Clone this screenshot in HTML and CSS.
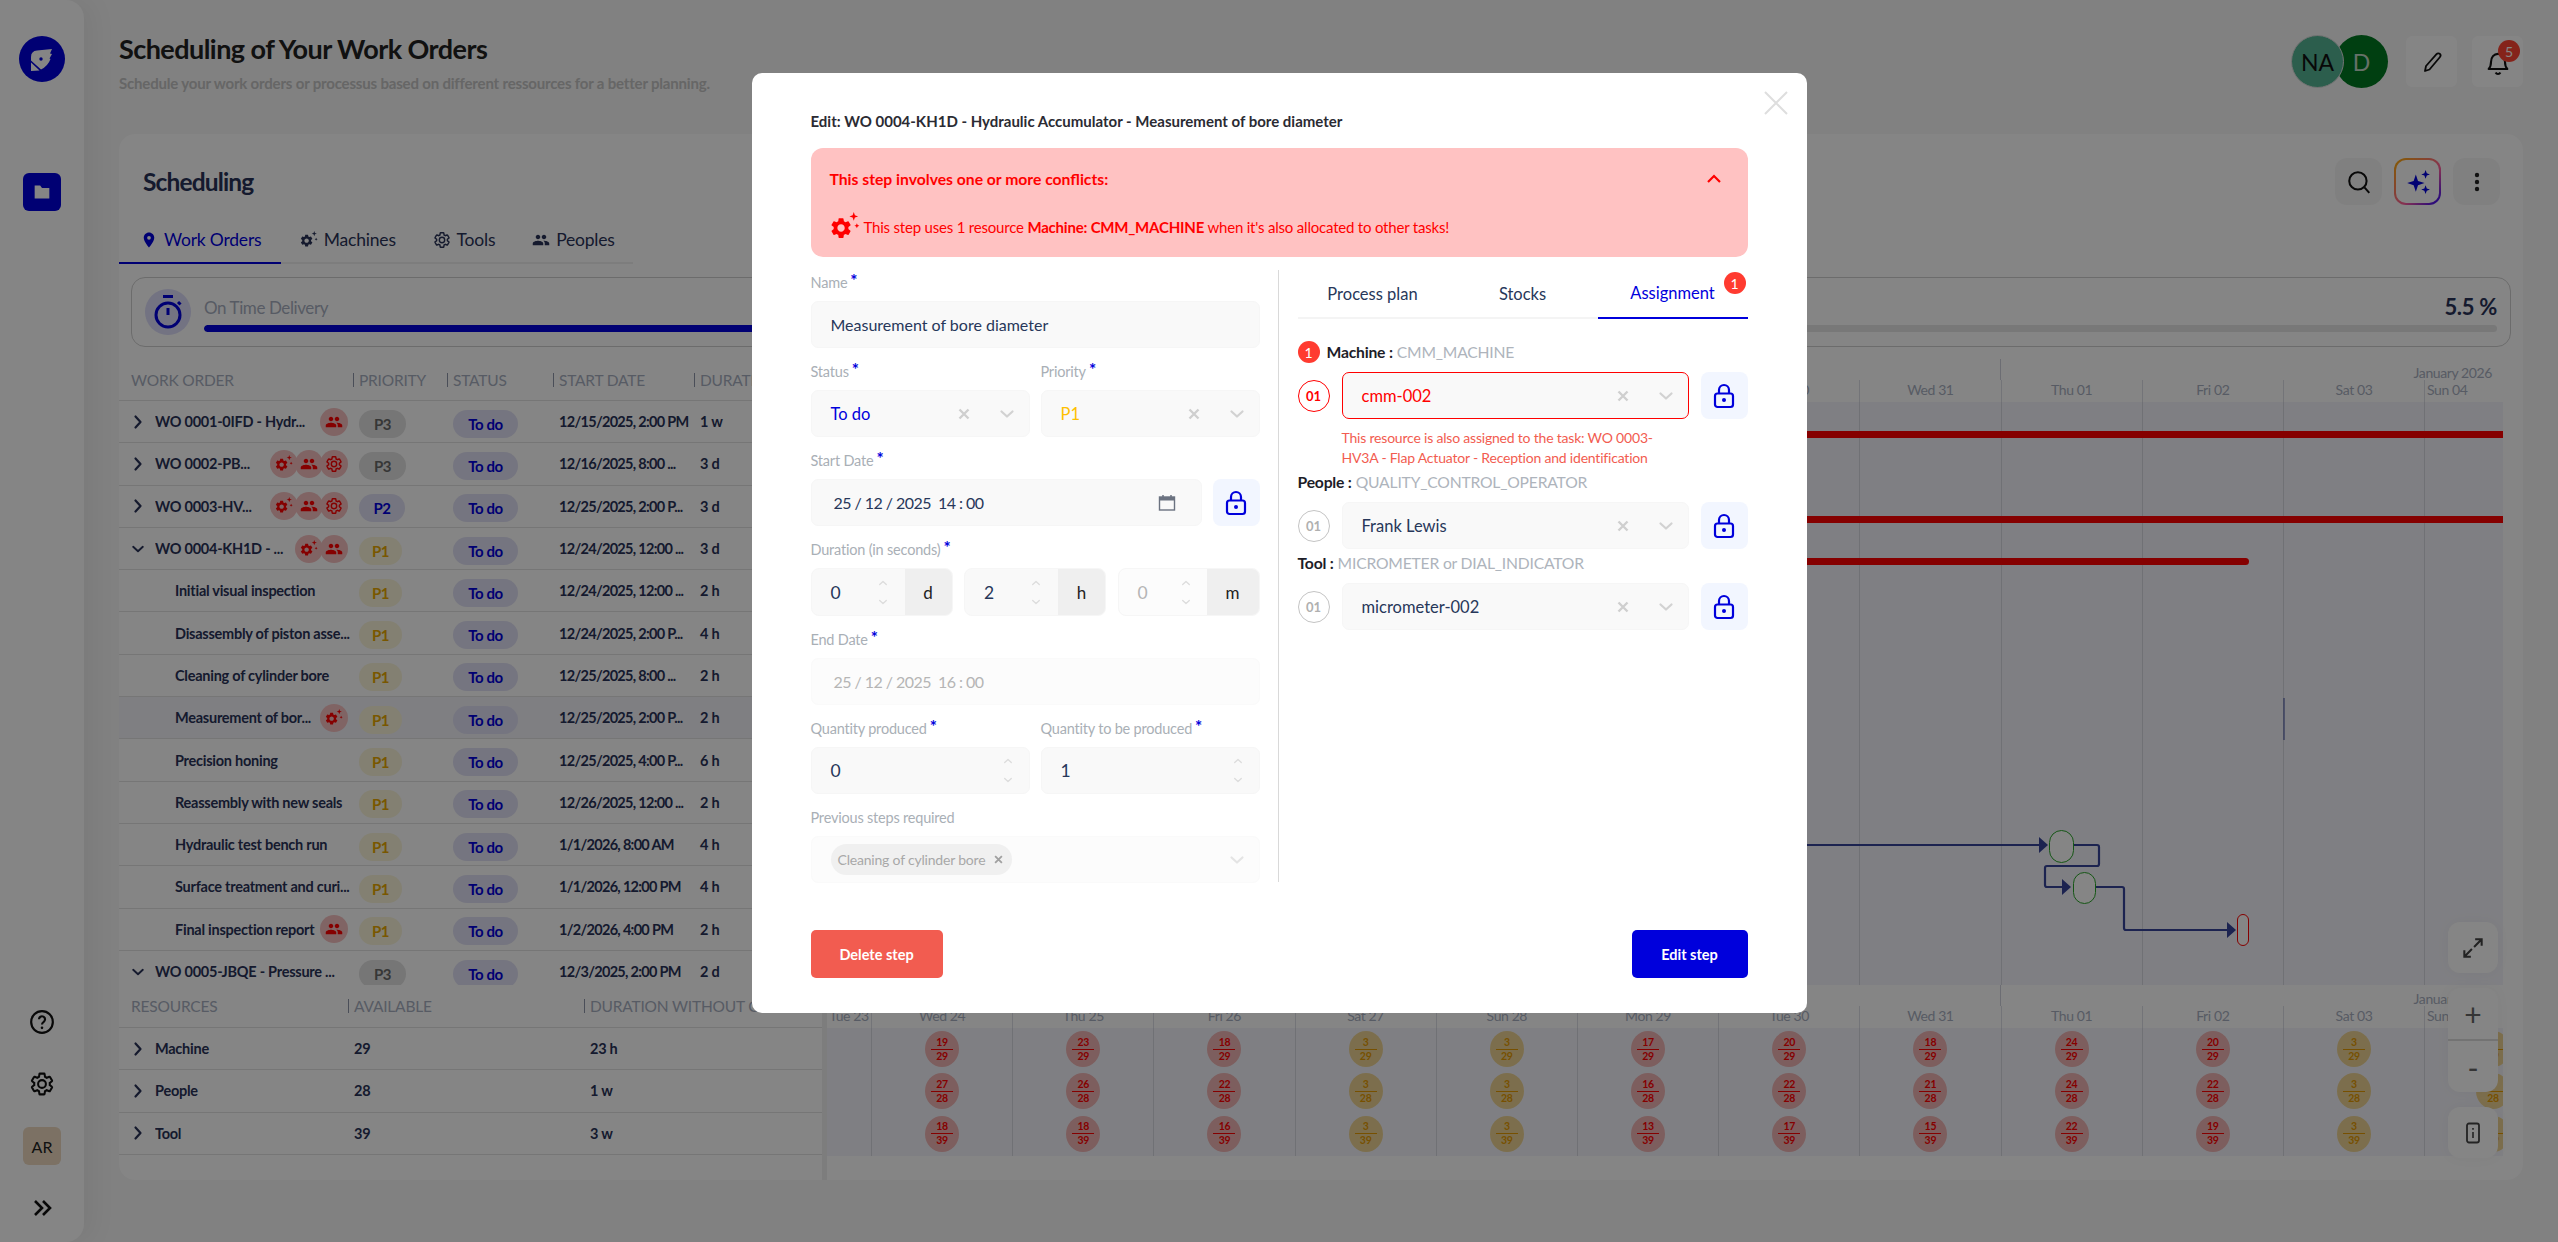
FILE: index.html
```html
<!DOCTYPE html>
<html lang="en">
<head>
<meta charset="utf-8">
<title>Scheduling of Your Work Orders</title>
<link rel="stylesheet" href="styles.css">
</head>
<body>
<svg class="defs" width="0" height="0" aria-hidden="true">
  <defs>
    <symbol id="i-gear" viewBox="0 0 24 24"><path d="M19.14 12.94c.04-.3.06-.61.06-.94 0-.32-.02-.64-.07-.94l2.03-1.58a.49.49 0 0 0 .12-.61l-1.92-3.32a.488.488 0 0 0-.59-.22l-2.39.96c-.5-.38-1.03-.7-1.62-.94l-.36-2.54a.484.484 0 0 0-.48-.41h-3.84c-.24 0-.43.17-.47.41l-.36 2.54c-.59.24-1.13.57-1.62.94l-2.39-.96c-.22-.08-.47 0-.59.22L2.74 8.87c-.12.21-.08.47.12.61l2.03 1.58c-.05.3-.09.63-.09.94s.02.64.07.94l-2.03 1.58a.49.49 0 0 0-.12.61l1.92 3.32c.12.22.37.29.59.22l2.39-.96c.5.38 1.03.7 1.62.94l.36 2.54c.05.24.24.41.48.41h3.84c.24 0 .44-.17.47-.41l.36-2.54c.59-.24 1.13-.56 1.62-.94l2.39.96c.22.08.47 0 .59-.22l1.92-3.32c.12-.22.07-.47-.12-.61l-2.01-1.58zM12 15.6c-1.98 0-3.6-1.62-3.6-3.6s1.62-3.6 3.6-3.6 3.6 1.62 3.6 3.6-1.62 3.6-3.6 3.6z"/></symbol>
    <symbol id="i-machine" viewBox="0 0 24 24"><g transform="translate(-1 3) scale(.82)"><path d="M19.14 12.94c.04-.3.06-.61.06-.94 0-.32-.02-.64-.07-.94l2.03-1.58a.49.49 0 0 0 .12-.61l-1.92-3.32a.488.488 0 0 0-.59-.22l-2.39.96c-.5-.38-1.03-.7-1.62-.94l-.36-2.54a.484.484 0 0 0-.48-.41h-3.84c-.24 0-.43.17-.47.41l-.36 2.54c-.59.24-1.13.57-1.62.94l-2.39-.96c-.22-.08-.47 0-.59.22L2.74 8.87c-.12.21-.08.47.12.61l2.03 1.58c-.05.3-.09.63-.09.94s.02.64.07.94l-2.03 1.58a.49.49 0 0 0-.12.61l1.92 3.32c.12.22.37.29.59.22l2.39-.96c.5.38 1.03.7 1.62.94l.36 2.54c.05.24.24.41.48.41h3.84c.24 0 .44-.17.47-.41l.36-2.54c.59-.24 1.13-.56 1.62-.94l2.39.96c.22.08.47 0 .59-.22l1.92-3.32c.12-.22.07-.47-.12-.61l-2.01-1.58zM12 15.6c-1.98 0-3.6-1.62-3.6-3.6s1.62-3.6 3.6-3.6 3.6 1.62 3.6 3.6-1.62 3.6-3.6 3.6z"/></g><path d="M19 0l.9 2.6 2.6.9-2.6.9-.9 2.6-.9-2.6-2.6-.9 2.6-.9zM21.5 9l.6 1.4 1.4.6-1.4.6-.6 1.4-.6-1.4-1.4-.6 1.4-.6z"/></symbol>
    <symbol id="i-people" viewBox="0 0 24 24"><path d="M16 11c1.66 0 2.99-1.34 2.99-3S17.66 5 16 5c-1.66 0-3 1.34-3 3s1.34 3 3 3zm-8 0c1.66 0 2.99-1.34 2.99-3S9.66 5 8 5C6.34 5 5 6.34 5 8s1.34 3 3 3zm0 2c-2.33 0-7 1.17-7 3.5V19h14v-2.5c0-2.33-4.67-3.5-7-3.5zm8 0c-.29 0-.62.02-.97.05 1.16.84 1.97 1.97 1.97 3.45V19h6v-2.5c0-2.33-4.67-3.5-7-3.5z"/></symbol>
    <symbol id="i-tool" viewBox="0 0 24 24"><path fill="none" stroke="currentColor" stroke-width="1.9" d="M19.14 12.94c.04-.3.06-.61.06-.94 0-.32-.02-.64-.07-.94l2.03-1.58a.49.49 0 0 0 .12-.61l-1.92-3.32a.488.488 0 0 0-.59-.22l-2.39.96c-.5-.38-1.03-.7-1.62-.94l-.36-2.54a.484.484 0 0 0-.48-.41h-3.84c-.24 0-.43.17-.47.41l-.36 2.54c-.59.24-1.13.57-1.62.94l-2.39-.96c-.22-.08-.47 0-.59.22L2.74 8.87c-.12.21-.08.47.12.61l2.03 1.58c-.05.3-.09.63-.09.94s.02.64.07.94l-2.03 1.58a.49.49 0 0 0-.12.61l1.92 3.32c.12.22.37.29.59.22l2.39-.96c.5.38 1.03.7 1.62.94l.36 2.54c.05.24.24.41.48.41h3.84c.24 0 .44-.17.47-.41l.36-2.54c.59-.24 1.13-.56 1.62-.94l2.39.96c.22.08.47 0 .59-.22l1.92-3.32c.12-.22.07-.47-.12-.61l-2.01-1.58zM12 15.6c-1.98 0-3.6-1.62-3.6-3.6s1.62-3.6 3.6-3.6 3.6 1.62 3.6 3.6-1.62 3.6-3.6 3.6z"/></symbol>
    <symbol id="i-pin" viewBox="0 0 24 24"><path d="M12 2C8.13 2 5 5.13 5 9c0 5.25 7 13 7 13s7-7.75 7-13c0-3.87-3.13-7-7-7zm0 9.5a2.5 2.5 0 0 1 0-5 2.5 2.5 0 0 1 0 5z"/></symbol>
    <symbol id="i-right" viewBox="0 0 10 16"><path d="M2.5 2.5L7.5 8l-5 5.5" fill="none" stroke="currentColor" stroke-width="2.2" stroke-linecap="round" stroke-linejoin="round"/></symbol>
    <symbol id="i-down" viewBox="0 0 16 10"><path d="M2.5 2.5L8 7.5l5.5-5" fill="none" stroke="currentColor" stroke-width="2.2" stroke-linecap="round" stroke-linejoin="round"/></symbol>
    <symbol id="i-x" viewBox="0 0 12 12"><path d="M1.5 1.5l9 9m0-9l-9 9" fill="none" stroke="currentColor" stroke-width="2.4"/></symbol>
    <symbol id="i-lock" viewBox="0 0 22 26"><rect x="2" y="10.5" width="18" height="13.5" rx="2.5" fill="none" stroke="currentColor" stroke-width="2.2"/><path d="M6 10V7a5 5 0 0 1 10 0v3" fill="none" stroke="currentColor" stroke-width="2.2"/><circle cx="11" cy="17" r="2"/></symbol>
  </defs>
</svg>

<div class="app">
  <aside class="sidebar">
    <div class="logo">
      <svg viewBox="0 0 46 46" width="46" height="46"><path d="M12 21Q12 15 18 14.500L33 13l-2 4.500 2 .5-2.500 4.500 1 .5Q29 30 22 33.500L12 24.500z" fill="#fff"/><path d="M12 26.500l8.500 8-8.500.5z" fill="#fff"/><circle cx="22" cy="23" r="1.700" fill="#0000dc"/></svg>
    </div>
    <div class="side-btn side-btn-active">
      <svg viewBox="0 0 24 24" width="22" height="22"><path d="M4 5h6l2 2.5h8V19H4z" fill="#fff"/></svg>
    </div>
    <div class="side-bottom">
      <div class="side-btn">
        <svg viewBox="0 0 24 24" width="26" height="26"><circle cx="12" cy="12" r="10" fill="none" stroke="#111" stroke-width="2"/><path d="M9.2 9.5a2.8 2.8 0 1 1 4.4 2.3c-1 .7-1.6 1.2-1.6 2.4" fill="none" stroke="#111" stroke-width="2"/><circle cx="12" cy="17.4" r="1.2" fill="#111"/></svg>
      </div>
      <div class="side-btn side-gear">
        <svg viewBox="0 0 24 24" width="26" height="26"><use href="#i-tool"/></svg>
      </div>
      <div class="side-btn avatar-ar">AR</div>
      <div class="side-more">
        <svg viewBox="0 0 20 20" width="20" height="20"><path d="M3 3l7 7-7 7M11 3l7 7-7 7" fill="none" stroke="#111" stroke-width="2.6"/></svg>
      </div>
    </div>
  </aside>

  <main class="main">
    <header class="pagehead">
      <div class="pagehead-text">
        <h1 class="page-title">Scheduling of Your Work Orders</h1>
        <p class="page-sub">Schedule your work orders or processus based on different ressources for a better planning.</p>
      </div>
      <div class="pagehead-actions">
        <div class="avatars">
          <span class="avatar avatar-na">NA</span>
          <span class="avatar avatar-d">D</span>
        </div>
        <div class="icon-tile">
          <svg viewBox="0 0 24 24" width="24" height="28"><path d="M5 21l1-5L16.5 4.2c1-1.100 2.500-1.200 3.400-.3s.8 2.300-.1 3.400L9.500 19.500z" fill="none" stroke="#111" stroke-width="1.800" stroke-linejoin="round"/></svg>
        </div>
        <div class="icon-tile bell">
          <svg viewBox="0 0 24 24" width="28" height="28"><path d="M4 18c1.500-1.500 2-3 2-6 0-4 2.500-7 6-7s6 3 6 7c0 3 .5 4.500 2 6z" fill="none" stroke="#111" stroke-width="1.800" stroke-linejoin="round"/><path d="M10 21a2.200 2.200 0 0 0 4 0" fill="none" stroke="#111" stroke-width="1.800"/></svg>
          <span class="bell-badge">5</span>
        </div>
      </div>
    </header>

    <section class="card">
      <div class="card-head">
        <h2 class="card-title">Scheduling</h2>
        <div class="card-actions">
          <div class="tool-btn">
            <svg viewBox="0 0 24 24" width="26" height="26"><circle cx="11" cy="11" r="8" fill="none" stroke="#111" stroke-width="1.900"/><path d="M17 17l4.500 5" stroke="#111" stroke-width="1.900"/></svg>
          </div>
          <div class="tool-btn tool-ai">
            <svg viewBox="0 0 24 24" width="26" height="26" fill="#0000dc"><path d="M10 5l2 6 6 2-6 2-2 6-2-6-6-2 6-2z"/><path d="M19 1l1.100 3 2.900 1-2.900 1L19 9l-1.100-3L15 5l2.900-1zM19 15l1.100 3 2.900 1-2.900 1-1.100 3-1.100-3-2.900-1 2.900-1z"/></svg>
          </div>
          <div class="tool-btn">
            <svg viewBox="0 0 24 24" width="24" height="24" fill="#222"><circle cx="12" cy="5" r="2.200"/><circle cx="12" cy="12" r="2.200"/><circle cx="12" cy="19" r="2.200"/></svg>
          </div>
        </div>
      </div>

      <nav class="tabs">
        <div class="tab tab-active"><svg class="tab-ico" viewBox="0 0 24 24"><use href="#i-pin"/></svg>Work Orders</div>
        <div class="tab"><svg class="tab-ico" viewBox="0 0 24 24"><use href="#i-machine"/></svg>Machines</div>
        <div class="tab"><svg class="tab-ico" viewBox="0 0 24 24"><use href="#i-tool"/></svg>Tools</div>
        <div class="tab"><svg class="tab-ico" viewBox="0 0 24 24"><use href="#i-people"/></svg>Peoples</div>
      </nav>

      <div class="otd">
        <div class="otd-icon">
          <svg viewBox="0 0 32 36" width="32" height="36"><path d="M11 2.500h10" stroke="#0000dc" stroke-width="3"/><circle cx="16" cy="21" r="12" fill="none" stroke="#0000dc" stroke-width="3"/><path d="M16 14v7" stroke="#0000dc" stroke-width="3"/><path d="M26 8l2.500 2.500" stroke="#0000dc" stroke-width="3"/></svg>
        </div>
        <div class="otd-body">
          <div class="otd-top"><span class="otd-label">On Time Delivery</span><span class="otd-value">5.5 %</span></div>
          <div class="otd-bar"><div class="otd-fill"></div></div>
        </div>
      </div>

      <div class="split">
        <div class="left-pane">
          <div class="thead wo-grid">
            <div class="th th-first">WORK ORDER</div>
            <div class="th">PRIORITY</div>
            <div class="th">STATUS</div>
            <div class="th">START DATE</div>
            <div class="th">DURATION</div>
          </div>
          <div class="tbody">
            <div class="tr wo-grid">
              <div class="name"><svg class="chev-r"><use href="#i-right"/></svg><span class="name-text">WO 0001-0IFD - Hydr...</span><span class="badges"><span class="badge"><svg><use href="#i-people"/></svg></span></span></div>
              <div class="cell"><span class="pill p3">P3</span></div>
              <div class="cell"><span class="pill todo">To do</span></div>
              <div class="cell">12/15/2025, 2:00 PM</div><div class="cell">1 w</div>
            </div>
            <div class="tr wo-grid">
              <div class="name"><svg class="chev-r"><use href="#i-right"/></svg><span class="name-text">WO 0002-PB...</span><span class="badges"><span class="badge"><svg><use href="#i-machine"/></svg></span><span class="badge"><svg><use href="#i-people"/></svg></span><span class="badge"><svg><use href="#i-tool"/></svg></span></span></div>
              <div class="cell"><span class="pill p3">P3</span></div>
              <div class="cell"><span class="pill todo">To do</span></div>
              <div class="cell">12/16/2025, 8:00 ...</div><div class="cell">3 d</div>
            </div>
            <div class="tr wo-grid">
              <div class="name"><svg class="chev-r"><use href="#i-right"/></svg><span class="name-text">WO 0003-HV...</span><span class="badges"><span class="badge"><svg><use href="#i-machine"/></svg></span><span class="badge"><svg><use href="#i-people"/></svg></span><span class="badge"><svg><use href="#i-tool"/></svg></span></span></div>
              <div class="cell"><span class="pill p2">P2</span></div>
              <div class="cell"><span class="pill todo">To do</span></div>
              <div class="cell">12/25/2025, 2:00 P...</div><div class="cell">3 d</div>
            </div>
            <div class="tr wo-grid">
              <div class="name"><svg class="chev-d"><use href="#i-down"/></svg><span class="name-text">WO 0004-KH1D - ...</span><span class="badges"><span class="badge"><svg><use href="#i-machine"/></svg></span><span class="badge"><svg><use href="#i-people"/></svg></span></span></div>
              <div class="cell"><span class="pill p1">P1</span></div>
              <div class="cell"><span class="pill todo">To do</span></div>
              <div class="cell">12/24/2025, 12:00 ...</div><div class="cell">3 d</div>
            </div>
            <div class="tr wo-grid">
              <div class="name name-sub"><span class="name-text">Initial visual inspection</span></div>
              <div class="cell"><span class="pill p1">P1</span></div>
              <div class="cell"><span class="pill todo">To do</span></div>
              <div class="cell">12/24/2025, 12:00 ...</div><div class="cell">2 h</div>
            </div>
            <div class="tr wo-grid">
              <div class="name name-sub"><span class="name-text">Disassembly of piston asse...</span></div>
              <div class="cell"><span class="pill p1">P1</span></div>
              <div class="cell"><span class="pill todo">To do</span></div>
              <div class="cell">12/24/2025, 2:00 P...</div><div class="cell">4 h</div>
            </div>
            <div class="tr wo-grid">
              <div class="name name-sub"><span class="name-text">Cleaning of cylinder bore</span></div>
              <div class="cell"><span class="pill p1">P1</span></div>
              <div class="cell"><span class="pill todo">To do</span></div>
              <div class="cell">12/25/2025, 8:00 ...</div><div class="cell">2 h</div>
            </div>
            <div class="tr wo-grid tr-selected">
              <div class="name name-sub"><span class="name-text">Measurement of bor...</span><span class="badges"><span class="badge"><svg><use href="#i-machine"/></svg></span></span></div>
              <div class="cell"><span class="pill p1">P1</span></div>
              <div class="cell"><span class="pill todo">To do</span></div>
              <div class="cell">12/25/2025, 2:00 P...</div><div class="cell">2 h</div>
            </div>
            <div class="tr wo-grid">
              <div class="name name-sub"><span class="name-text">Precision honing</span></div>
              <div class="cell"><span class="pill p1">P1</span></div>
              <div class="cell"><span class="pill todo">To do</span></div>
              <div class="cell">12/25/2025, 4:00 P...</div><div class="cell">6 h</div>
            </div>
            <div class="tr wo-grid">
              <div class="name name-sub"><span class="name-text">Reassembly with new seals</span></div>
              <div class="cell"><span class="pill p1">P1</span></div>
              <div class="cell"><span class="pill todo">To do</span></div>
              <div class="cell">12/26/2025, 12:00 ...</div><div class="cell">2 h</div>
            </div>
            <div class="tr wo-grid">
              <div class="name name-sub"><span class="name-text">Hydraulic test bench run</span></div>
              <div class="cell"><span class="pill p1">P1</span></div>
              <div class="cell"><span class="pill todo">To do</span></div>
              <div class="cell">1/1/2026, 8:00 AM</div><div class="cell">4 h</div>
            </div>
            <div class="tr wo-grid">
              <div class="name name-sub"><span class="name-text">Surface treatment and curi...</span></div>
              <div class="cell"><span class="pill p1">P1</span></div>
              <div class="cell"><span class="pill todo">To do</span></div>
              <div class="cell">1/1/2026, 12:00 PM</div><div class="cell">4 h</div>
            </div>
            <div class="tr wo-grid">
              <div class="name name-sub"><span class="name-text">Final inspection report</span><span class="badges"><span class="badge"><svg><use href="#i-people"/></svg></span></span></div>
              <div class="cell"><span class="pill p1">P1</span></div>
              <div class="cell"><span class="pill todo">To do</span></div>
              <div class="cell">1/2/2026, 4:00 PM</div><div class="cell">2 h</div>
            </div>
            <div class="tr wo-grid">
              <div class="name"><svg class="chev-d"><use href="#i-down"/></svg><span class="name-text">WO 0005-JBQE - Pressure ...</span></div>
              <div class="cell"><span class="pill p3">P3</span></div>
              <div class="cell"><span class="pill todo">To do</span></div>
              <div class="cell">12/3/2025, 2:00 PM</div><div class="cell">2 d</div>
            </div>
          </div>
          <div class="thead res-grid res-head">
            <div class="th th-first">RESOURCES</div>
            <div class="th">AVAILABLE</div>
            <div class="th">DURATION WITHOUT CONFLICTS</div>
          </div>
          <div class="tr res-grid">
            <div class="name"><svg class="chev-r"><use href="#i-right"/></svg><span class="name-text">Machine</span></div>
            <div class="cell">29</div><div class="cell">23 h</div>
          </div>
          <div class="tr res-grid">
            <div class="name"><svg class="chev-r"><use href="#i-right"/></svg><span class="name-text">People</span></div>
            <div class="cell">28</div><div class="cell">1 w</div>
          </div>
          <div class="tr res-grid">
            <div class="name"><svg class="chev-r"><use href="#i-right"/></svg><span class="name-text">Tool</span></div>
            <div class="cell">39</div><div class="cell">3 w</div>
          </div>
        </div>

        <div class="splitter"></div>

        <div class="right-pane">
          <div class="gantt-top">
            <div class="g-months"><div class="g-month-a"></div><div class="g-month-b">January 2026</div></div>
            <div class="g-days">
              <div class="g-head g-first">Tue 23</div><div class="g-head">Wed 24</div><div class="g-head">Thu 25</div><div class="g-head">Fri 26</div><div class="g-head">Sat 27</div><div class="g-head">Sun 28</div><div class="g-head">Mon 29</div><div class="g-head">Tue 30</div><div class="g-head">Wed 31</div><div class="g-head">Thu 01</div><div class="g-head">Fri 02</div><div class="g-head">Sat 03</div><div class="g-head g-last">Sun 04</div>
            </div>
            <div class="g-canvas">
              <div class="g-grid">
                <div class="g-col g-first"></div><div class="g-col"></div><div class="g-col"></div><div class="g-col"></div><div class="g-col"></div><div class="g-col"></div><div class="g-col"></div><div class="g-col"></div><div class="g-col"></div><div class="g-col"></div><div class="g-col"></div><div class="g-col"></div><div class="g-col g-last"></div>
              </div>
              <svg class="g-draw" viewBox="0 0 1676 583" width="1676" height="583">
                <rect x="800" y="29" width="876" height="7" fill="#ff0000"/>
                <rect x="800" y="114" width="876" height="7" fill="#ff0000"/>
                <rect x="800" y="156" width="622" height="7" rx="3.500" fill="#ff0000"/>
                <path d="M1457 296v42" stroke="#36449a" stroke-width="1"/>
                <g fill="none" stroke="#36449a" stroke-width="2.200">
                  <path d="M873 443H1214"/>
                  <path d="M1246 443H1270q2 0 2 2V462q0 2-2 2H1220q-2 0-2 2V483q0 2 2 2H1238"/>
                  <path d="M1268 485H1295q2 0 2 2V526q0 2 2 2H1402"/>
                </g>
                <g fill="#36449a">
                  <path d="M1212 435l9 8-9 8z"/>
                  <path d="M1235 477l9 8-9 8z"/>
                  <path d="M1400 520l9 8-9 8z"/>
                </g>
                <rect x="1222.500" y="428.500" width="24" height="32" rx="12" fill="#fff" stroke="#2aa52a"/>
                <rect x="1246.500" y="470.500" width="22" height="31" rx="11" fill="#fff" stroke="#2aa52a"/>
                <rect x="1410.500" y="512.500" width="11" height="31" rx="5.500" fill="#fff" stroke="#ff0000"/>
              </svg>
            </div>
          </div>

          <div class="gantt-low">
            <div class="g-months"><div class="g-month-a"></div><div class="g-month-b">January 2026</div></div>
            <div class="g-days">
              <div class="g-head g-first">Tue 23</div><div class="g-head">Wed 24</div><div class="g-head">Thu 25</div><div class="g-head">Fri 26</div><div class="g-head">Sat 27</div><div class="g-head">Sun 28</div><div class="g-head">Mon 29</div><div class="g-head">Tue 30</div><div class="g-head">Wed 31</div><div class="g-head">Thu 01</div><div class="g-head">Fri 02</div><div class="g-head">Sat 03</div><div class="g-head g-last">Sun 04</div>
            </div>
            <div class="g-load">
              <div class="g-col g-first"></div>
              <div class="g-col"><div class="load red"><b>19</b><b>29</b></div><div class="load red"><b>27</b><b>28</b></div><div class="load red"><b>18</b><b>39</b></div></div>
              <div class="g-col"><div class="load red"><b>23</b><b>29</b></div><div class="load red"><b>26</b><b>28</b></div><div class="load red"><b>18</b><b>39</b></div></div>
              <div class="g-col"><div class="load red"><b>18</b><b>29</b></div><div class="load red"><b>22</b><b>28</b></div><div class="load red"><b>16</b><b>39</b></div></div>
              <div class="g-col"><div class="load amber"><b>3</b><b>29</b></div><div class="load amber"><b>3</b><b>28</b></div><div class="load amber"><b>3</b><b>39</b></div></div>
              <div class="g-col"><div class="load amber"><b>3</b><b>29</b></div><div class="load amber"><b>3</b><b>28</b></div><div class="load amber"><b>3</b><b>39</b></div></div>
              <div class="g-col"><div class="load red"><b>17</b><b>29</b></div><div class="load red"><b>16</b><b>28</b></div><div class="load red"><b>13</b><b>39</b></div></div>
              <div class="g-col"><div class="load red"><b>20</b><b>29</b></div><div class="load red"><b>22</b><b>28</b></div><div class="load red"><b>17</b><b>39</b></div></div>
              <div class="g-col"><div class="load red"><b>18</b><b>29</b></div><div class="load red"><b>21</b><b>28</b></div><div class="load red"><b>15</b><b>39</b></div></div>
              <div class="g-col"><div class="load red"><b>24</b><b>29</b></div><div class="load red"><b>24</b><b>28</b></div><div class="load red"><b>22</b><b>39</b></div></div>
              <div class="g-col"><div class="load red"><b>20</b><b>29</b></div><div class="load red"><b>22</b><b>28</b></div><div class="load red"><b>19</b><b>39</b></div></div>
              <div class="g-col"><div class="load amber"><b>3</b><b>29</b></div><div class="load amber"><b>3</b><b>28</b></div><div class="load amber"><b>3</b><b>39</b></div></div>
              <div class="g-col g-last"><div class="load amber"><b>3</b><b>29</b></div><div class="load amber"><b>3</b><b>28</b></div><div class="load amber"><b>3</b><b>39</b></div></div>
            </div>
          </div>
        </div>
      </div>

      <div class="map-controls">
        <div class="map-btn">
          <svg viewBox="0 0 24 24" width="26" height="26"><path d="M14 4h6v6M20 4L13 11M10 20H4v-6M4 20l7-7" fill="none" stroke="#444" stroke-width="1.900"/></svg>
        </div>
        <div class="map-zoom"><div class="map-zoom-btn">+</div><div class="map-zoom-btn">-</div></div>
        <div class="map-btn">
          <svg viewBox="0 0 24 24" width="24" height="24"><rect x="6" y="2.500" width="12" height="19" rx="2" fill="none" stroke="#444" stroke-width="1.800"/><path d="M12 7v1.800M12 11v6" stroke="#444" stroke-width="1.600"/></svg>
        </div>
      </div>
    </section>
  </main>
</div>

<div class="overlay">
  <div class="modal">
    <svg class="modal-close" viewBox="0 0 24 24" width="24" height="24"><path d="M1 1l22 22M23 1L1 23" stroke="#dedede" stroke-width="2"/></svg>
    <div class="modal-title">Edit: WO 0004-KH1D - Hydraulic Accumulator - Measurement of bore diameter</div>

    <div class="alert">
      <div class="alert-head">
        <span class="alert-title">This step involves one or more conflicts:</span>
        <svg viewBox="0 0 16 10" width="16" height="10"><path d="M2 8l6-6 6 6" fill="none" stroke="#ff0000" stroke-width="2.200"/></svg>
      </div>
      <div class="alert-line">
        <svg class="alert-ico" viewBox="0 0 24 24" width="30" height="30"><use href="#i-machine"/></svg>
        <span>This step uses 1 resource <strong>Machine: CMM_MACHINE</strong> when it's also allocated to other tasks!</span>
      </div>
    </div>

    <div class="modal-body">
      <div class="form-col">
        <div class="field">
          <div class="label">Name<i>*</i></div>
          <div class="control">Measurement of bore diameter</div>
        </div>
        <div class="field-row">
          <div class="field">
            <div class="label">Status<i>*</i></div>
            <div class="control control-select"><span class="val-blue">To do</span><span class="sel-icons"><svg class="ico-x"><use href="#i-x"/></svg><svg class="ico-chev"><use href="#i-down"/></svg></span></div>
          </div>
          <div class="field">
            <div class="label">Priority<i>*</i></div>
            <div class="control control-select"><span class="val-amber">P1</span><span class="sel-icons"><svg class="ico-x"><use href="#i-x"/></svg><svg class="ico-chev"><use href="#i-down"/></svg></span></div>
          </div>
        </div>
        <div class="field">
          <div class="label">Start Date<i>*</i></div>
          <div class="control-line">
            <div class="control control-date grow"><span>25 / 12 / 2025 &nbsp;14 : 00</span><svg viewBox="0 0 18 18" width="18" height="18"><rect x="1.500" y="3" width="15" height="13" fill="none" stroke="#6b7280" stroke-width="1.400"/><rect x="1.500" y="3" width="15" height="3.500" fill="#6b7280"/><path d="M5 1v3M13 1v3" stroke="#6b7280" stroke-width="1.500"/></svg></div>
            <div class="lock-btn"><svg viewBox="0 0 22 26" width="22" height="26"><use href="#i-lock"/></svg></div>
          </div>
        </div>
        <div class="field">
          <div class="label">Duration (in seconds)<i>*</i></div>
          <div class="duration">
            <div class="num-group">
              <div class="num-input"><span>0</span><span class="spin"><svg class="ico-up"><use href="#i-down"/></svg><svg class="ico-dn"><use href="#i-down"/></svg></span></div>
              <div class="addon">d</div>
            </div>
            <div class="num-group">
              <div class="num-input"><span>2</span><span class="spin"><svg class="ico-up"><use href="#i-down"/></svg><svg class="ico-dn"><use href="#i-down"/></svg></span></div>
              <div class="addon">h</div>
            </div>
            <div class="num-group num-disabled">
              <div class="num-input"><span>0</span><span class="spin"><svg class="ico-up"><use href="#i-down"/></svg><svg class="ico-dn"><use href="#i-down"/></svg></span></div>
              <div class="addon">m</div>
            </div>
          </div>
        </div>
        <div class="field">
          <div class="label">End Date<i>*</i></div>
          <div class="control control-disabled control-date">25 / 12 / 2025 &nbsp;16 : 00</div>
        </div>
        <div class="field-row">
          <div class="field">
            <div class="label">Quantity produced<i>*</i></div>
            <div class="control num-input-full"><span>0</span><span class="spin"><svg class="ico-up"><use href="#i-down"/></svg><svg class="ico-dn"><use href="#i-down"/></svg></span></div>
          </div>
          <div class="field">
            <div class="label">Quantity to be produced<i>*</i></div>
            <div class="control num-input-full"><span>1</span><span class="spin"><svg class="ico-up"><use href="#i-down"/></svg><svg class="ico-dn"><use href="#i-down"/></svg></span></div>
          </div>
        </div>
        <div class="field">
          <div class="label">Previous steps required</div>
          <div class="control control-disabled control-select">
            <span class="chip">Cleaning of cylinder bore<svg class="chip-x"><use href="#i-x"/></svg></span>
            <svg class="ico-chev ico-chev-solo"><use href="#i-down"/></svg>
          </div>
        </div>
      </div>

      <div class="assign-col">
        <div class="m-tabs">
          <div class="m-tab">Process plan</div>
          <div class="m-tab">Stocks</div>
          <div class="m-tab m-tab-active">Assignment<span class="count">1</span></div>
        </div>

        <div class="res-block res-block-first">
          <div class="res-label"><span class="count count-inline">1</span><b>Machine :</b> <span>CMM_MACHINE</span></div>
          <div class="res-row res-row-error">
            <span class="qty">01</span>
            <div class="control control-select grow"><span>cmm-002</span><span class="sel-icons"><svg class="ico-x"><use href="#i-x"/></svg><svg class="ico-chev"><use href="#i-down"/></svg></span></div>
            <div class="lock-btn"><svg viewBox="0 0 22 26" width="22" height="26"><use href="#i-lock"/></svg></div>
          </div>
          <p class="res-error">This resource is also assigned to the task: WO 0003-HV3A - Flap Actuator - Reception and identification</p>
        </div>
        <div class="res-block">
          <div class="res-label"><b>People :</b> <span>QUALITY_CONTROL_OPERATOR</span></div>
          <div class="res-row">
            <span class="qty">01</span>
            <div class="control control-select grow"><span>Frank Lewis</span><span class="sel-icons"><svg class="ico-x"><use href="#i-x"/></svg><svg class="ico-chev"><use href="#i-down"/></svg></span></div>
            <div class="lock-btn"><svg viewBox="0 0 22 26" width="22" height="26"><use href="#i-lock"/></svg></div>
          </div>
        </div>
        <div class="res-block">
          <div class="res-label"><b>Tool :</b> <span>MICROMETER or DIAL_INDICATOR</span></div>
          <div class="res-row">
            <span class="qty">01</span>
            <div class="control control-select grow"><span>micrometer-002</span><span class="sel-icons"><svg class="ico-x"><use href="#i-x"/></svg><svg class="ico-chev"><use href="#i-down"/></svg></span></div>
            <div class="lock-btn"><svg viewBox="0 0 22 26" width="22" height="26"><use href="#i-lock"/></svg></div>
          </div>
        </div>
      </div>
    </div>

    <div class="modal-foot">
      <div class="btn btn-danger">Delete step</div>
      <div class="btn btn-primary">Edit step</div>
    </div>
  </div>
</div>
</body>
</html>
```

FILE: styles.css
```css
* { box-sizing: border-box; }
html, body { margin: 0; padding: 0; }
body {
  width: 2558px; height: 1242px; overflow: hidden; position: relative;
  background: #f7f7f7; color: #27375a;
  font-family: "Lato", "Noto Sans", sans-serif; font-size: 14px;
}
.defs { position: absolute; }
p, h1, h2 { margin: 0; }

/* shell */
.app { display: flex; height: 1242px; isolation: isolate; }
.sidebar {
  width: 84px; flex: none; background: #fff; border-radius: 0 18px 18px 0;
  box-shadow: 10px 0 24px rgba(0,0,0,.05);
  display: flex; flex-direction: column; align-items: center; padding: 36px 0 24px; position: relative;
}
.logo { width: 46px; height: 46px; border-radius: 50%; background: #0000dc; }
.logo svg { display: block; }
.side-btn { width: 38px; height: 38px; border-radius: 6px; display: flex; align-items: center; justify-content: center; background: #fff; }
.side-btn-active { background: #0000dc; margin-top: 91px; }
.side-bottom { margin-top: auto; display: flex; flex-direction: column; align-items: center; gap: 24px; }
.side-gear { color: #111; }
.avatar-ar { background: #edd9c0; color: #222; font-size: 16px; }
.side-more { height: 20px; margin-top: 9px; }

.main { flex: 1; min-width: 0; padding: 0 35px; }
.pagehead { height: 134px; display: flex; justify-content: space-between; }
.pagehead-text { padding-top: 33px; }
.page-title { font-size: 27px; line-height: 32px; font-weight: 700; color: #222; letter-spacing: -.55px; }
.page-sub { font-size: 15px; line-height: 20px; margin-top: 8px; font-weight: 700; color: #c4c4c4; letter-spacing: -.18px; }
.pagehead-actions { display: flex; align-items: flex-start; padding-top: 35px; }
.avatars { display: flex; margin-right: 18px; }
.avatar { width: 53px; height: 53px; border-radius: 50%; display: flex; align-items: center; justify-content: center; font-size: 23px; }
.avatar-na { background: #55b595; color: #111; border: 1px solid #ddd; position: relative; z-index: 1; }
.avatar-d { background: #007a22; color: #c4d8c8; margin-left: -9px; }
.icon-tile { width: 51px; height: 51px; margin-top: 1px; margin-right: 15px; background: #fff; border-radius: 6px; display: flex; align-items: center; justify-content: center; position: relative; }
.icon-tile.bell { margin-right: 0; }
.bell-badge { position: absolute; left: 26px; top: 4px; width: 22px; height: 22px; border-radius: 50%; background: #ff4433; color: #fff; font-size: 14px; display: flex; align-items: center; justify-content: center; }

/* card */
.card { height: 1046px; background: #fff; border-radius: 16px; position: relative; }
.card-head { display: flex; justify-content: space-between; align-items: center; height: 71px; padding: 24px 23px 0 24px; }
.card-title { font-size: 24.5px; line-height: 45px; font-weight: 700; color: #2a3358; letter-spacing: -.85px; }
.card-actions { display: flex; gap: 12px; }
.tool-btn { width: 47px; height: 47px; border-radius: 12px; background: #f6f6f6; display: flex; align-items: center; justify-content: center; }
.tool-ai { background: linear-gradient(#fff,#fff) padding-box, linear-gradient(135deg,#ffb300,#ff5fa0 60%,#2200ff) border-box; border: 2px solid transparent; }

.tabs { display: flex; width: 514px; height: 47px; margin-top: 12px; border-bottom: 2px solid #f0f0f0; }
.tab { flex: none; white-space: nowrap; display: flex; align-items: center; gap: 6px; padding: 0 18.4px; margin-bottom: -2px; border-bottom: 2px solid transparent; font-size: 17.5px; color: #2a3358; fill: #2a3358; letter-spacing: -.2px; }
.tab-ico { width: 18px; height: 18px; color: #2a3358; flex: none; }
.tab-active { color: #0000dc; fill: #0000dc; border-bottom-color: #0000dc; padding: 0 20px 0 21px; }
.tab-active .tab-ico { color: #0000dc; }

.otd { display: flex; align-items: center; gap: 13px; height: 70px; margin: 13px 12px 0; padding: 0 13px; border: 1px solid #cfcfcf; border-radius: 14px; }
.otd-icon { width: 46px; height: 46px; border-radius: 50%; background: #dcdcfa; display: flex; align-items: center; justify-content: center; flex: none; }
.otd-body { flex: 1; }
.otd-top { display: flex; justify-content: space-between; align-items: center; height: 28px; margin-bottom: 5px; }
.otd-label { font-size: 17px; color: #a8afc0; letter-spacing: -.4px; padding-top: 2px; }
.otd-value { font-size: 22px; font-weight: 700; color: #2a3358; letter-spacing: -.3px; }
.otd-bar { height: 7px; background: #e6e6e6; border-radius: 4px; overflow: hidden; }
.otd-fill { width: 50%; height: 100%; background: #0000dc; border-radius: 4px; }

.split { display: flex; margin-top: 12px; height: 821px; }
.left-pane { width: 703px; flex: none; }
.splitter { width: 5px; flex: none; background: #f0f0f0; }
.right-pane { width: 1676px; flex: none; overflow: hidden; }

.wo-grid { display: grid; grid-template-columns: 234px 94px 106px 141px 128px; }
.res-grid { display: grid; grid-template-columns: 229px 236px 238px; }
.thead { height: 42px; border-bottom: 1px solid #e3e3e3; align-items: center; }
.res-head { height: 43px; }
.th { font-size: 15.5px; color: #a8afc0; padding-left: 6px; position: relative; white-space: nowrap; letter-spacing: -.2px; }
.th::before { content: ""; position: absolute; left: 0; top: 2px; bottom: 2px; width: 1px; background: #8f96aa; }
.th-first { padding-left: 12px; }
.th-first::before { display: none; }
.tbody { height: 584px; overflow: hidden; }
.tr { height: 42.3px; border-bottom: 1px solid #e3e3e3; align-items: center; font-size: 14.5px; font-weight: 700; color: #2a3358; letter-spacing: -.25px; }
.tr-selected { background: #f3f3fa; }
.name { display: flex; align-items: center; padding-left: 14px; min-width: 0; }
.name-sub { padding-left: 56px; }
.name-text { white-space: nowrap; overflow: hidden; flex: 1; min-width: 0; }
.chev-r { width: 10px; height: 16px; margin-right: 12px; color: #2a3358; flex: none; }
.chev-d { width: 14px; height: 10px; margin: 0 10px 0 -2px; color: #2a3358; flex: none; }
.badges { display: flex; margin-right: 5px; flex: none; }
.badge { width: 28px; height: 28px; margin-left: -3px; border-radius: 50%; background: #f6c0c0; color: #f00; fill: #f00; display: flex; align-items: center; justify-content: center; }
.badge svg { width: 18px; height: 18px; }
.cell { padding-left: 6px; white-space: nowrap; }
.wo-grid .cell:nth-child(4) { letter-spacing: -.7px; }
.pill { display: inline-flex; align-items: center; justify-content: center; height: 28px; margin-top: 4px; vertical-align: top; border-radius: 14px; font-weight: 700; font-size: 15px; letter-spacing: -.4px; }
.p3 { width: 47px; background: #e2e2e2; color: #6a6a6a; }
.p2 { width: 46px; background: #e1e1f5; color: #0000dc; }
.p1 { width: 43px; background: #fbf6da; color: #e8a800; }
.todo { width: 65px; background: #e1e1f5; color: #0000dc; }

/* gantt */
.gantt-top { height: 626px; }
.gantt-low { height: 171px; }
.g-months { display: flex; height: 21px; }
.g-month-a { width: 1174px; flex: none; border-right: 1px solid #cfd2dc; }
.g-month-b { flex: 1; text-align: right; padding: 5px 11px 0 0; font-size: 14px; line-height: 18px; color: #a8afc0; letter-spacing: -.4px; white-space: nowrap; }
.g-days { display: flex; height: 22px; }
.g-head { width: 141.2px; flex: none; border-left: 1px solid #dcdfe6; text-align: center; font-size: 14px; line-height: 20px; color: #a8afc0; letter-spacing: -.4px; white-space: nowrap; }
.g-head.g-first { width: 44px; border-left: none; overflow: hidden; }
.g-head.g-last { width: 80px; text-align: left; padding-left: 2px; }
.g-canvas { height: 583px; position: relative; background: #f4f4fb; overflow: hidden; }
.g-grid { display: flex; height: 100%; }
.g-col { width: 141.2px; flex: none; border-left: 1px solid #d6d8e0; display: flex; flex-direction: column; align-items: center; }
.g-col.g-first { width: 44px; border-left: none; }
.g-col.g-last { width: 80px; align-items: flex-start; padding-left: 51px; }
.g-draw { position: absolute; left: 0; top: 0; }
.g-load { display: flex; height: 128px; background: #f4f4fb; overflow: hidden; padding-top: 0; }
.load { width: 34px; height: 36px; margin: 3px 0 3.300px; border-radius: 50%; display: flex; flex-direction: column; align-items: center; justify-content: center; font-size: 10.500px; line-height: 11px; flex: none; letter-spacing: -.3px; }
.load b { width: 22px; text-align: center; }
.load b:first-child { border-bottom: 1px solid currentColor; padding-bottom: 1px; margin-bottom: 1px; }
.red { background: #f0b4b4; color: #f00; }
.amber { background: #eed494; color: #e59a00; }

.map-controls { position: absolute; right: 25px; bottom: 22px; width: 50px; display: flex; flex-direction: column; gap: 15px; }
.map-btn { height: 51px; background: #fff; border-radius: 12px; display: flex; align-items: center; justify-content: center; box-shadow: 0 0 14px rgba(0,0,0,.04); }
.map-zoom { height: 104px; background: #fff; border-radius: 12px; display: flex; flex-direction: column; box-shadow: 0 0 14px rgba(0,0,0,.04); }
.map-zoom-btn { flex: 1; display: flex; align-items: center; justify-content: center; font-size: 30px; color: #666; }
.map-zoom-btn:first-child { border-bottom: 2px solid #ddd; }

/* modal */
.overlay { position: absolute; inset: 0; background: rgba(0,0,0,.48); display: flex; justify-content: center; align-items: flex-start; padding-top: 73px; }
.modal { width: 1055px; height: 940px; background: #fff; border-radius: 10px; padding: 39px 59px 0; position: relative; display: flex; flex-direction: column; color: #27375a; }
.modal-close { position: absolute; right: 19px; top: 18px; }
.modal-title { font-size: 15px; line-height: 18px; font-weight: 700; color: #2b2b33; }
.alert { height: 109px; margin-top: 18px; background: #ffc2c2; border-radius: 12px; padding: 0 19px; color: #f00; }
.alert-head { height: 62px; padding-right: 7px; display: flex; justify-content: space-between; align-items: center; }
.alert-title { font-size: 15.7px; font-weight: 700; }
.alert-line { display: flex; align-items: center; gap: 4px; margin-top: 2px; font-size: 15px; letter-spacing: -.2px; }
.alert-line strong { font-weight: 700; }
.alert-ico { color: #f00; fill: #f00; flex: none; }

.modal-body { display: flex; height: 612px; margin-top: 13px; }
.form-col { width: 468px; flex: none; padding: 4px 18px 0 0; border-right: 1px solid #d9d9d9; display: flex; flex-direction: column; gap: 15px; }
.field { display: flex; flex-direction: column; min-width: 0; }
.field-row { display: grid; grid-template-columns: 219px 219px; gap: 11px; }
.label { height: 18px; line-height: 18px; margin-bottom: 9px; font-size: 14.5px; color: #a9afb6; letter-spacing: -.2px; white-space: nowrap; }
.label i { font-style: normal; font-size: 17px; line-height: 10px; color: #0000dc; font-weight: 700; margin-left: 3px; position: relative; top: -1px; }
.control { height: 47px; background: #f9f9f9; border: 1px solid #f6f6f6; border-radius: 7px; padding: 0 19px; display: flex; align-items: center; font-size: 16px; color: #27375a; }
.control-select { justify-content: space-between; padding-right: 14px; font-size: 16.5px; }
.sel-icons { display: flex; align-items: center; gap: 29px; }
.ico-x { width: 12px; height: 12px; color: #cfcfcf; flex: none; }
.ico-chev { width: 16px; height: 10px; color: #d2d2d2; flex: none; }
.val-blue { color: #0000dc; }
.val-amber { color: #ffc000; }
.control-line { display: flex; gap: 11px; }
.control-date { justify-content: space-between; padding: 0 25px 0 22px; letter-spacing: -.55px; }
.control-disabled { background: #fcfcfc; border-color: #fafafa; color: #b5b5b5; justify-content: flex-start; }
.control-disabled.control-select { justify-content: space-between; }
.lock-btn { width: 47px; height: 47px; flex: none; border-radius: 8px; background: #f2f6ff; color: #0000dc; fill: #0000dc; display: flex; align-items: center; justify-content: center; }
.duration { display: flex; gap: 11.500px; }
.num-group { flex: 1; height: 48px; display: flex; background: #f9f9f9; border: 1px solid #f6f6f6; border-radius: 8px; overflow: hidden; font-size: 17.5px; }
.num-input { flex: 1; display: flex; justify-content: space-between; align-items: center; padding: 0 17px 0 19px; }
.addon { width: 47px; flex: none; background: #efefef; display: flex; align-items: center; justify-content: center; color: #222; font-size: 17px; }
.num-disabled { background: #fcfcfc; }
.num-disabled .num-input { color: #b5b5b5; padding-right: 16px; }
.num-disabled .addon { width: 52px; }
.spin { display: flex; flex-direction: column; gap: 13px; }
.ico-up, .ico-dn { width: 10px; height: 6px; color: #dcdcdc; display: block; }
.ico-up { transform: rotate(180deg); }
.num-input-full { justify-content: space-between; padding-right: 16px; font-size: 17.5px; }
.chip { height: 31px; width: 181px; margin-left: 0; border-radius: 16px; background: #f0f0f0; color: #a8a8a8; font-size: 14px; letter-spacing: -.2px; display: flex; align-items: center; justify-content: space-between; padding: 0 9px 0 7px; white-space: nowrap; }
.chip-x { width: 9px; height: 9px; color: #a0a0a0; flex: none; }
.ico-chev-solo { margin-right: 0; color: #e4e4e4; }

.assign-col { flex: 1; padding-left: 19px; display: flex; flex-direction: column; }
.m-tabs { display: grid; grid-template-columns: repeat(3, 150px); height: 49px; border-bottom: 2px solid #f4f4f4; }
.m-tab { display: flex; align-items: center; justify-content: center; font-size: 16.5px; height: 49px; padding-bottom: 2px; color: #27375a; position: relative; }
.m-tab-active { color: #0000dc; border-bottom: 2px solid #0000dc; }
.count { width: 22px; height: 22px; border-radius: 50%; background: #ff3b30; color: #fff; font-size: 14px; display: flex; align-items: center; justify-content: center; flex: none; }
.m-tab .count { position: absolute; left: 126px; top: 2px; }
.res-block { margin-top: 3px; }
.res-block-first { margin-top: 22px; }
.res-label { display: flex; align-items: center; height: 22px; white-space: nowrap; font-size: 15.7px; color: #aeb4bc; letter-spacing: -.2px; gap: 4px; }
.res-label b { color: #1d1d28; font-weight: 700; }
.count-inline { margin: 0 3px 0 0; letter-spacing: 0; }
.res-row { display: flex; align-items: center; gap: 12px; margin-top: 9px; }
.qty { width: 32px; height: 32px; flex: none; border-radius: 50%; border: 1px solid #c4c4c4; color: #b0b0b0; font-size: 13px; font-weight: 700; display: flex; align-items: center; justify-content: center; }
.grow { flex: 1; min-width: 0; }
.res-row-error .qty { border-color: #f00; color: #f00; }
.res-row-error .control { border-color: #f00; color: #f00; }
.res-error { margin: 9px 0 0 44px; width: 320px; font-size: 14px; line-height: 20px; color: #f25c50; letter-spacing: -.2px; }

.modal-foot { display: flex; justify-content: space-between; margin-top: 48px; }
.btn { height: 48px; border-radius: 5px; display: flex; align-items: center; justify-content: center; color: #fff; font-weight: 700; font-size: 14.500px; }
.btn-danger { width: 132px; background: #f25c50; }
.btn-primary { width: 116px; background: #0000dc; }
```
